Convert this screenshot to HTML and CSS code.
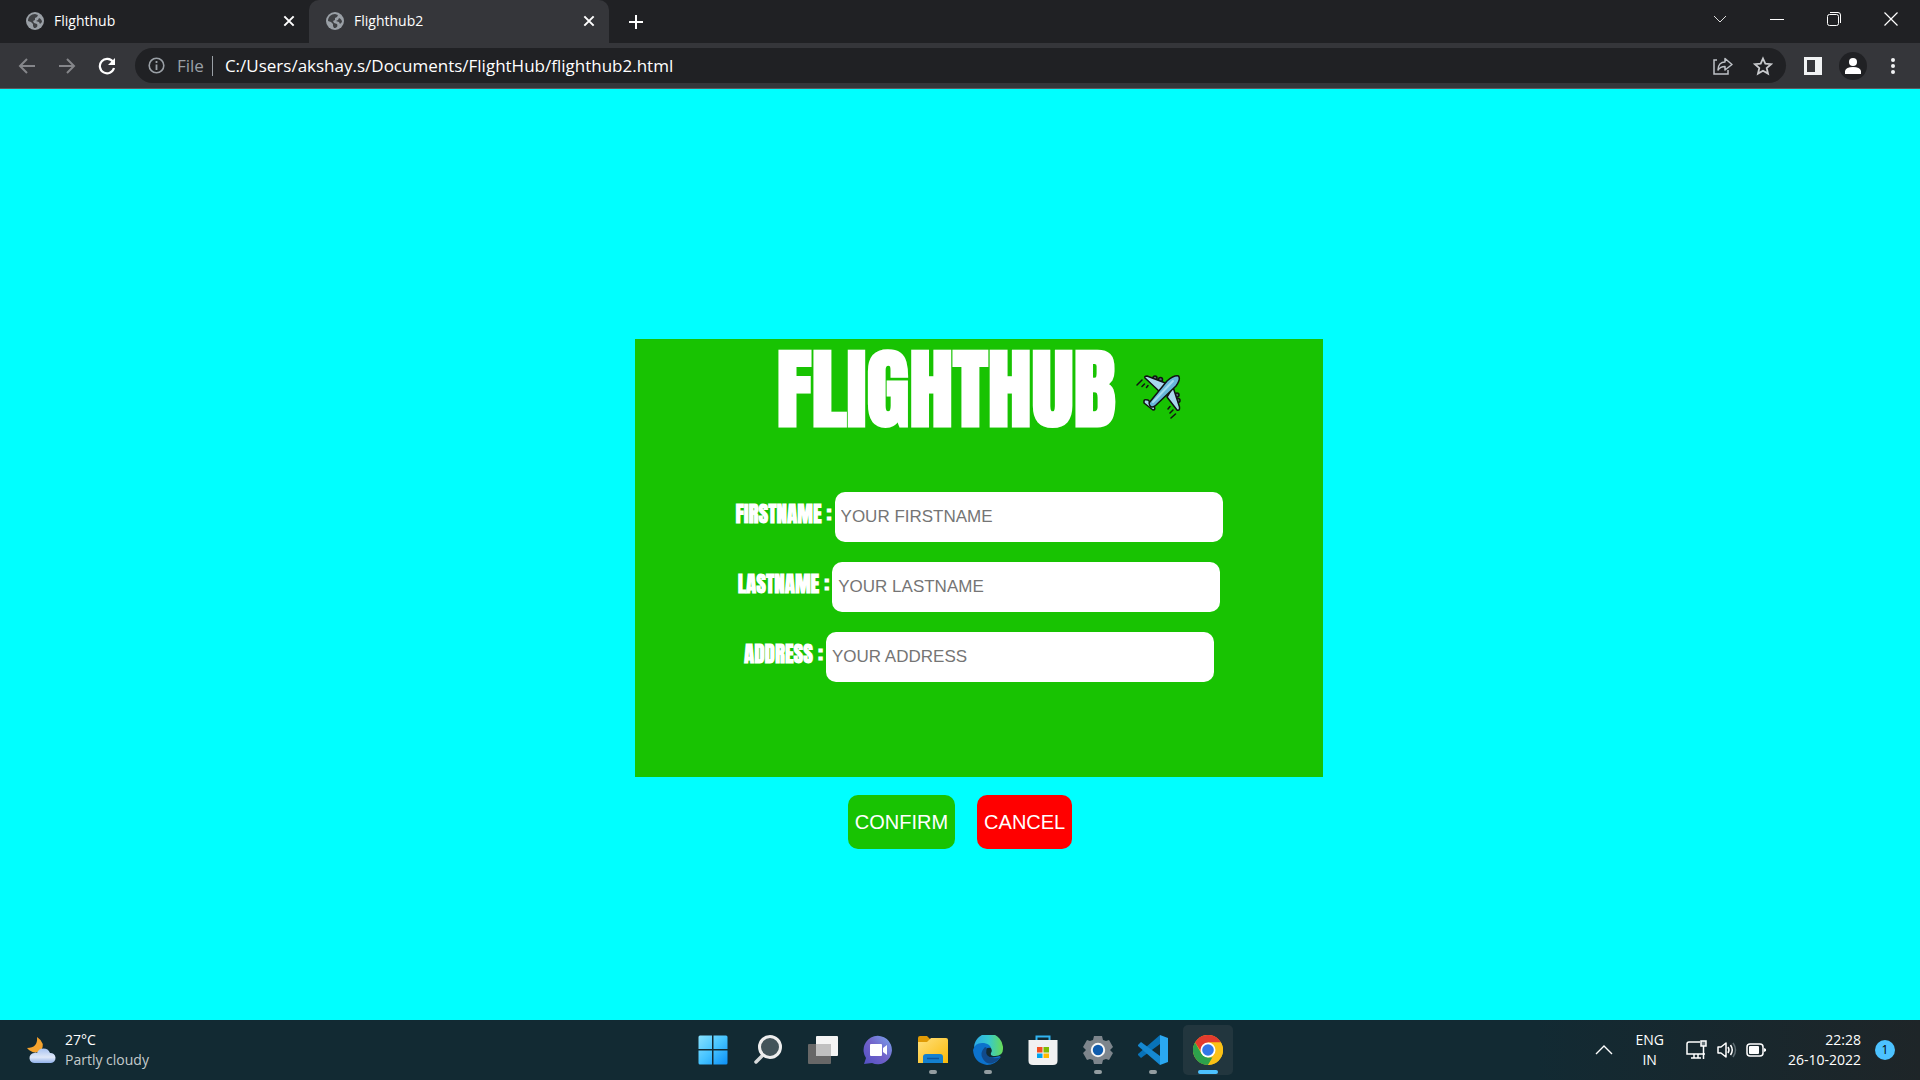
FILE: index.html
```html
<!DOCTYPE html>
<html lang="en">
<head>
<meta charset="utf-8">
<title>Flighthub2</title>
<link rel="stylesheet" href="styles.css">
</head>
<body>
<svg class="defs" aria-hidden="true">
  <symbol id="globe" viewBox="0 0 18 18">
    <circle cx="9" cy="9" r="9" fill="#9aa0a6"/>
    <path d="M9 2 C5 2 2 5 2 9 L5 10 L7 12 V14 L8 16 C11 16 12 14 11 12 L8 11 L7 9 L9 8 V6 L11 5 L12 3 Z M13 6 L12 8 L10 9 L13 10 L14 12 L16 10 C16 8 15 7 13 6 Z" fill="#35363a" opacity=".9"/>
  </symbol>
  <symbol id="close" viewBox="0 0 12 12"><path d="M2 2 L10 10 M10 2 L2 10" stroke="#fff" stroke-width="1.700" fill="none"/></symbol>
</svg>

<header>
  <div class="tabstrip">
    <div class="tab">
      <svg class="favicon"><use href="#globe"/></svg>
      <span class="tab-title">Flighthub</span>
      <button class="tab-close" aria-label="Close tab"><svg width="14" height="14"><use href="#close"/></svg></button>
    </div>
    <div class="tab active">
      <svg class="favicon"><use href="#globe"/></svg>
      <span class="tab-title">Flighthub2</span>
      <button class="tab-close" aria-label="Close tab"><svg width="14" height="14"><use href="#close"/></svg></button>
    </div>
    <button class="new-tab" aria-label="New tab"><svg width="16" height="16" viewBox="0 0 16 16"><path d="M8 1 V15 M1 8 H15" stroke="#fff" stroke-width="2"/></svg></button>
    <div class="window-controls">
      <button aria-label="Search tabs"><svg width="14" height="14" viewBox="0 0 14 14"><path d="M1 4 L7 10 L13 4" stroke="#ddd" fill="none"/></svg></button>
      <button aria-label="Minimise"><svg width="14" height="14" viewBox="0 0 14 14"><path d="M0 7.5 H14" stroke="#fff"/></svg></button>
      <button aria-label="Restore"><svg width="14" height="14" viewBox="0 0 14 14"><rect x=".5" y="2.5" width="11" height="11" rx="2" stroke="#fff" fill="none"/><path d="M3 .5 H11 Q13.500 .5 13.500 3 V11" stroke="#fff" fill="none"/></svg></button>
      <button aria-label="Close"><svg width="14" height="14" viewBox="0 0 14 14"><path d="M.5 .5 L13.500 13.500 M13.500 .5 L.5 13.500" stroke="#fff" stroke-width="1.200"/></svg></button>
    </div>
  </div>

  <div class="toolbar">
    <button class="nav" aria-label="Back"><svg width="18" height="18" viewBox="0 0 18 18"><path d="M17 9 H2 M9 2 L2 9 L9 16" stroke="#85868a" stroke-width="2" fill="none"/></svg></button>
    <button class="nav" aria-label="Forward"><svg width="18" height="18" viewBox="0 0 18 18"><path d="M1 9 H16 M9 2 L16 9 L9 16" stroke="#85868a" stroke-width="2" fill="none"/></svg></button>
    <button class="nav" aria-label="Reload"><svg width="18" height="18" viewBox="0 0 18 18"><path d="M15 5 A7.200 7.200 0 1 0 16 11" stroke="#fff" stroke-width="2.200" fill="none"/><path d="M17 1 V8 H10 Z" fill="#fff"/></svg></button>
    <div class="omnibox">
      <svg width="17" height="17" viewBox="0 0 17 17"><circle cx="8.500" cy="8.500" r="7.300" stroke="#9aa0a6" stroke-width="1.600" fill="none"/><path d="M8.500 7.500 V13 M8.500 4 V6" stroke="#9aa0a6" stroke-width="1.800"/></svg>
      <label class="scheme" for="url">File</label>
      <input id="url" type="text" value="C:/Users/akshay.s/Documents/FlightHub/flighthub2.html">
      <button aria-label="Share"><svg width="20" height="20" viewBox="0 0 20 20"><path d="M4 4 H1 V18 H15 V14" stroke="#bdc1c6" stroke-width="1.500" fill="none"/><path d="M5 14 C5 9 8 6 12 6 V2.500 L19 8.500 L12 14 V10.500 C9 10.500 7 11 5 14 Z" stroke="#bdc1c6" stroke-width="1.500" fill="none" stroke-linejoin="round"/></svg></button>
      <button aria-label="Bookmark"><svg width="20" height="20" viewBox="0 0 20 20"><path d="M10 2.500 L12.300 7.600 L18 8.200 L13.700 12 L15 17.600 L10 14.700 L5 17.600 L6.300 12 L2 8.200 L7.700 7.600 Z" stroke="#c8cacd" stroke-width="1.800" fill="none"/></svg></button>
    </div>
    <button class="nav" aria-label="Side panel"><svg width="18" height="18" viewBox="0 0 18 18"><path d="M0 0 H18 V18 H0 Z M3 3 V15 H11 V3 Z" fill="#f1f3f4" fill-rule="evenodd"/></svg></button>
    <button class="nav" aria-label="Profile"><svg width="28" height="28" viewBox="0 0 28 28"><circle cx="14" cy="14" r="14" fill="#202124"/><circle cx="14" cy="10" r="4" fill="#fff"/><path d="M6 22 V19 Q7 15 14 15 T22 19 V22 Z" fill="#fff"/></svg></button>
    <button class="nav" aria-label="Menu"><svg width="4" height="18" viewBox="0 0 4 18"><g fill="#f1f3f4"><circle cx="2" cy="3" r="2"/><circle cx="2" cy="9" r="2"/><circle cx="2" cy="15" r="2"/></g></svg></button>
  </div>
</header>

<main>
  <form>
    <section class="card">
      <div class="heading">
        <h1>FLIGHTHUB</h1>
        <svg width="46" height="46" viewBox="0 0 46 46">
          <g stroke="#111" stroke-width="1.500" stroke-linejoin="round" stroke-linecap="round">
            <circle cx="19" cy="3" r="2" fill="#567"/><circle cx="24.500" cy="4.500" r="2" fill="#567"/><circle cx="41" cy="20" r="2" fill="#567"/><circle cx="42" cy="25.500" r="2" fill="#567"/>
            <path d="M9 3 Q8 1 11 1 L32 9 L24 17 Z M37 12 L43.500 32 Q44 36 41 35 L31 22 Z M8 26 Q8 24 12 25 L18 31 Q20 35 17 35 L8 28 Z" fill="#a9d7ee"/>
            <path d="M13 28 L31 6 Q38 0 42.500 1 Q45 4 40 11 L19 31 Q14 34 13 28 Z" fill="#68b7da"/>
            <path d="M17 27 L37 6" stroke="#a5dbef" stroke-width="2" fill="none"/>
            <path d="M1 10 L6 5 M6 11.500 L8.500 9 M10.500 12.500 L12 10.500 M32 34 L34 31.500 M34 38 L37 35 M35 43 L39.500 39" fill="none"/>
          </g>
        </svg>
      </div>
      <div class="field"><label for="first">FIRSTNAME :</label><input id="first" type="text" placeholder="YOUR FIRSTNAME"></div>
      <div class="field"><label for="last">LASTNAME :</label><input id="last" type="text" placeholder="YOUR LASTNAME"></div>
      <div class="field"><label for="address">ADDRESS :</label><input id="address" type="text" placeholder="YOUR ADDRESS"></div>
    </section>
    <div class="actions">
      <button class="confirm" type="button">CONFIRM</button>
      <button class="cancel" type="button">CANCEL</button>
    </div>
  </form>
</main>

<footer>
  <button class="weather">
    <svg width="30" height="28" viewBox="0 0 30 28">
      <defs><linearGradient id="cloud" x2="0" y2="1"><stop stop-color="#a9c3f0"/><stop offset=".6" stop-color="#dfe8f8"/><stop offset="1" stop-color="#8fb0ea"/></linearGradient></defs>
      <path d="M11 1 Q20 7 15 15 Q7 19 1 12 Q12 12 11 1 Z" fill="#f5a32e"/>
      <path d="M9 27 A5 5 0 0 1 8 17 Q10 16 11 17 A7 7 0 0 1 24 17 A5 5 0 0 1 25 27 Z" fill="url(#cloud)"/>
    </svg>
    <span class="lines"><span>27°C</span><span class="muted">Partly cloudy</span></span>
  </button>

  <nav class="apps">
    <button aria-label="Start"><svg width="30" height="30" viewBox="0 0 30 30">
      <defs><linearGradient id="win" gradientUnits="userSpaceOnUse" x1="0" y1="0" x2="30" y2="30"><stop stop-color="#8be3ff"/><stop offset=".5" stop-color="#45c3ff"/><stop offset="1" stop-color="#0a8df5"/></linearGradient></defs>
      <path d="M2 0.500 H14 V14 H0.500 V2 Q.5 .5 2 .5 Z M15.500 .5 H28 Q29.500 .5 29.500 2 V14 H15.500 Z M.5 15.500 H14 V29.500 H2 Q.5 29.500 .5 28 Z M15.500 15.500 H29.500 V28 Q29.500 29.500 28 29.500 H15.500 Z" fill="url(#win)"/></svg></button>
    <button aria-label="Search"><svg width="30" height="30" viewBox="0 0 30 30"><path d="M10 20 L3 27" stroke="#d7dadb" stroke-width="3.500" stroke-linecap="round"/><circle cx="17" cy="12" r="10.500" fill="#43545a" stroke="#eee" stroke-width="3"/></svg></button>
    <button aria-label="Task view"><svg width="30" height="30" viewBox="0 0 30 30"><rect x="8" y="1" width="22" height="20" rx="1" fill="#f4f4f4"/><rect y="9" width="23" height="20" rx="1" fill="#676767"/><path d="M8 9 H23 V21 H8 Z" fill="#c0c0c0"/></svg></button>
    <button aria-label="Chat"><svg width="30" height="30" viewBox="0 0 30 30">
      <defs><linearGradient id="chat" x1="0" x2="1" y1="1" y2="0"><stop stop-color="#5250c4"/><stop offset=".5" stop-color="#7262c9"/><stop offset="1" stop-color="#7aa7f0"/></linearGradient></defs>
      <path d="M1 29 L3 23 A14.200 14.200 0 1 1 9 28 Z" fill="url(#chat)"/><rect x="7" y="9" width="12" height="12" rx="1" fill="#fff"/><path d="M20 13 L24 10 V20 L20 17 Z" fill="#fff"/></svg></button>
    <button class="running" aria-label="File Explorer"><svg width="30" height="30" viewBox="0 0 30 30">
      <defs><linearGradient id="folder" x2="1" y2="1"><stop stop-color="#ffe07c"/><stop offset="1" stop-color="#fbb908"/></linearGradient></defs>
      <path d="M0 3 Q0 1 2 1 H9 L12 4 V9 H0 Z" fill="#e09a05"/><path d="M0 7 H9 L13 3 H28 Q30 3 30 5 V28 H0 Z" fill="url(#folder)"/><path d="M5 28 V22 Q5 19 8 19 H22 Q25 19 25 22 V28 Z" fill="#1380d0"/><path d="M9 23.500 H21" stroke="#0d559c" stroke-width="1.500"/></svg></button>
    <button class="running" aria-label="Edge"><svg width="30" height="30" viewBox="0 0 30 30">
      <defs><linearGradient id="edge" x2="1"><stop stop-color="#2ba9e8"/><stop offset=".5" stop-color="#36c9cf"/><stop offset="1" stop-color="#68dc55"/></linearGradient></defs>
      <path d="M1 12 A14.500 14.500 0 0 1 30 14 Q30 21 22 21 Q17 21 18 18 Q20 15 17 12 Q12 7 1 12 Z" fill="url(#edge)"/>
      <path d="M0 15 Q2 7 11 8 Q17 9 18 13 Q12 12 12 18 Q14 25 27 21 Q28 22 27 23 Q22 30 14 30 Q1 28 0 15 Z" fill="#0c72cc"/>
      <path d="M12 12 Q6 18 10 24 Q14 30 20 28 Q25 26 28 22 Q20 25 15 21 Q12 18 14 13 Z" fill="#114a8b"/></svg></button>
    <button aria-label="Store"><svg width="30" height="30" viewBox="0 0 30 30"><path d="M8.500 6 V1.500 H21.500 V6" fill="none" stroke="#31b4f2" stroke-width="2"/><path d="M.5 5 H29.500 V26 Q29.500 30 25 30 H5 Q.5 30 .5 26 Z" fill="#f1f1f1"/><path d="M9 12 H14.500 V17.500 H9 Z" fill="#f25022"/><path d="M15.500 12 H21 V17.500 H15.500 Z" fill="#7fba00"/><path d="M9 18.500 H14.500 V23 H9 Z" fill="#00a4ef"/><path d="M15.500 18.500 H21 V23 H15.500 Z" fill="#ffb900"/></svg></button>
    <button class="running" aria-label="Settings"><svg width="30" height="30" viewBox="0 0 30 30"><path d="M11 1 H19 L20 5 L23 6 L26 5 L30 12 L27 15 L30 18 L26 25 L23 24 L20 25 L19 29 H11 L10 25 L7 24 L4 25 L0 18 L3 15 L0 12 L4 5 L7 6 L10 5 Z" fill="#7d858c" stroke-linejoin="round"/><circle cx="15" cy="15" r="6.200" fill="#0f5cad" stroke="#f5f5f5" stroke-width="2"/></svg></button>
    <button class="running" aria-label="Visual Studio Code"><svg width="30" height="30" viewBox="0 0 30 30"><path d="M22 0 L30 3 V27 L22 30 Z" fill="#2aa8f2"/><path d="M22 0 V9 L3 23 L0 20 V19 Z" fill="#0872b8"/><path d="M22 30 V21 L3 7 L0 10 V11 Z" fill="#1588d1"/></svg></button>
    <button class="running current" aria-label="Chrome"><svg width="30" height="30" viewBox="0 0 30 30"><circle cx="15" cy="15" r="15" fill="#fbc116"/><path d="M2 7.500 A15 15 0 0 1 28 7.500 H15 L9 18 Z" fill="#e33b2e"/><path d="M2 7.500 L8.500 18.800 Q11 22 15 22.500 H21 L15 30 A15 15 0 0 1 2 7.500 Z" fill="#2da14c"/><path d="M15 30 L21.500 18.800 L22 12 L15 7.500 H28 A15 15 0 0 1 15 30 Z" fill="#fbc116"/><circle cx="15" cy="15" r="7.500" fill="#fff"/><circle cx="15" cy="15" r="5.800" fill="#3277e8"/></svg></button>
  </nav>

  <div class="tray">
    <button aria-label="Hidden icons"><svg width="18" height="12" viewBox="0 0 18 12"><path d="M1 10 L9 2 L17 10" stroke="#fff" stroke-width="1.400" fill="none"/></svg></button>
    <button class="lines centered"><span>ENG</span><span>IN</span></button>
    <button class="status" aria-label="Network, volume and battery">
      <svg width="22" height="22" viewBox="0 0 22 22"><path d="M14 3 H3 Q1 3 1 5 V15 H19 M5 19 H15 M8 15 V19 M12 15 V19" stroke="#fff" stroke-width="1.500" fill="none"/><path d="M15 2 H20 V7 H15 Z M17.500 7 V20" stroke="#fff" stroke-width="1.500" fill="#68757a"/></svg>
      <svg width="20" height="18" viewBox="0 0 20 18"><path d="M1 6 H4 L9 2 V16 L4 12 H1 Z M11 6 Q13 9 11 12 M13.500 4 Q17 9 13.500 14" stroke="#fff" stroke-width="1.500" fill="none" stroke-linejoin="round"/><path d="M16 2 Q21 9 16 16" stroke="#5e6c72" stroke-width="1.500" fill="none"/></svg>
      <svg width="20" height="14" viewBox="0 0 20 14"><rect x="1" y="1" width="16" height="12" rx="3" stroke="#fff" stroke-width="1.500" fill="none"/><rect x="3" y="3" width="10" height="8" rx="1" fill="#fff"/><path d="M18 5 L20 6 V8 L18 9 Z" fill="#fff"/></svg>
    </button>
    <button class="lines clock"><span>22:28</span><span>26-10-2022</span></button>
    <button class="badge" aria-label="1 notification">1</button>
  </div>
</footer>
</body>
</html>
```
FILE: styles.css
```css
* { box-sizing: border-box; }

body {
  margin: 0;
  min-height: 100vh;
  display: flex;
  flex-direction: column;
  background: #00ffff;
  color: #fff;
  font-family: "Segoe UI", "Open Sans", sans-serif;
  font-size: 14px;
}

button, input {
  font: inherit;
  color: inherit;
  border: 0;
  padding: 0;
  margin: 0;
  background: none;
}

svg { display: block; flex: none; }
.defs { display: none; }

/* Browser frame */
header { background: #35363a; border-bottom: 1px solid #5b5c60; }

.tabstrip { display: flex; height: 43px; background: #202124; }

.tab {
  width: 300px;
  margin-left: 9px;
  padding: 0 13px 2px 17px;
  display: flex;
  align-items: center;
  gap: 10px;
}
.tab + .tab { margin-left: 0; }
.tab.active { background: #35363a; border-radius: 10px 10px 0 0; }
.favicon { width: 18px; height: 18px; }
.tab-title { flex: 1; }
.tab-close { display: grid; place-items: center; }
.new-tab { width: 54px; display: grid; place-items: center; }

.window-controls { display: flex; margin-left: auto; padding-right: 1px; }
.window-controls button {
  width: 57px;
  height: 37px;
  display: grid;
  place-items: center;
}

.toolbar { display: flex; align-items: center; height: 45px; padding: 0 7px; }
.nav { width: 40px; height: 40px; display: grid; place-items: center; }

.omnibox {
  flex: 1;
  height: 35px;
  margin: 0 7px 0 8px;
  padding: 0 13px;
  display: flex;
  align-items: center;
  gap: 12px;
  border-radius: 18px;
  background: #202124;
  font-size: 17px;
}
.scheme {
  color: #9aa0a6;
  padding-right: 8px;
  border-right: 1px solid #9aa0a6;
  line-height: 20px;
}
.omnibox input { flex: 1; min-width: 0; outline: 0; }
.omnibox button { margin-left: 8px; }

/* Page */
main {
  flex: 1;
  padding: 250px 16px 0;
  font-family: Arial, "Liberation Sans", sans-serif;
}
form { display: flex; flex-direction: column; align-items: center; }

.card {
  width: 100%;
  max-width: 688px;
  min-height: 438px;
  margin-left: 38px;
  background: #18c302;
  font-family: Impact, Anton, sans-serif;
}
.heading {
  display: flex;
  justify-content: center;
  align-items: center;
  gap: 20px;
  height: 153px;
  padding-bottom: 54px;
}
h1 { margin: 0; font-size: 88px; font-weight: bold; line-height: 100px; }
.heading svg { margin-top: 18px; }

.field {
  display: flex;
  justify-content: center;
  align-items: center;
  gap: 3px;
  margin-bottom: 20px;
}
.field label { font-size: 21px; font-weight: bold; line-height: 44px; padding-bottom: 6px; }
.field input {
  width: 388px;
  height: 50px;
  padding: 0 6px;
  border-radius: 10px;
  background: #fff;
  color: #000;
  font-family: Arial, "Liberation Sans", sans-serif;
  font-size: 17px;
}
.field input::placeholder { color: #757575; }

.actions { display: flex; gap: 22px; margin-top: 18px; }
.actions button {
  height: 54px;
  padding: 0 7px;
  border-radius: 10px;
  font-size: 20px;
}
.confirm { background: #18c302; }
.cancel { background: #ff0000; }

/* Taskbar */
footer {
  display: grid;
  grid-template-columns: 1fr auto 1fr;
  align-items: center;
  height: 60px;
  padding: 0 25px 0 26px;
  background: linear-gradient(90deg, #122a33 80%, #1e2528);
}
.weather { display: flex; align-items: center; gap: 9px; text-align: left; }
.lines { display: grid; line-height: 20px; }
.muted { color: #c4cacc; }

.apps { display: flex; gap: 5px; }
.apps button {
  position: relative;
  width: 50px;
  height: 50px;
  display: grid;
  place-items: center;
  border-radius: 5px;
}
.apps .current { background: #22363e; }
.running::after {
  content: "";
  position: absolute;
  bottom: 1px;
  left: 50%;
  width: 8px;
  height: 4px;
  margin-left: -4px;
  border-radius: 2px;
  background: #939da1;
}
.current::after { width: 20px; margin-left: -10px; background: #4cc2ff; }

.tray { display: flex; justify-content: flex-end; align-items: center; gap: 22px; }
.centered { text-align: center; }
.status { display: flex; align-items: center; gap: 9px; }
.clock { text-align: right; }
.badge {
  width: 20px;
  height: 20px;
  margin-left: -8px;
  border-radius: 50%;
  background: #4cc2ff;
  color: #000;
  font-size: 12px;
  line-height: 20px;
}
```
